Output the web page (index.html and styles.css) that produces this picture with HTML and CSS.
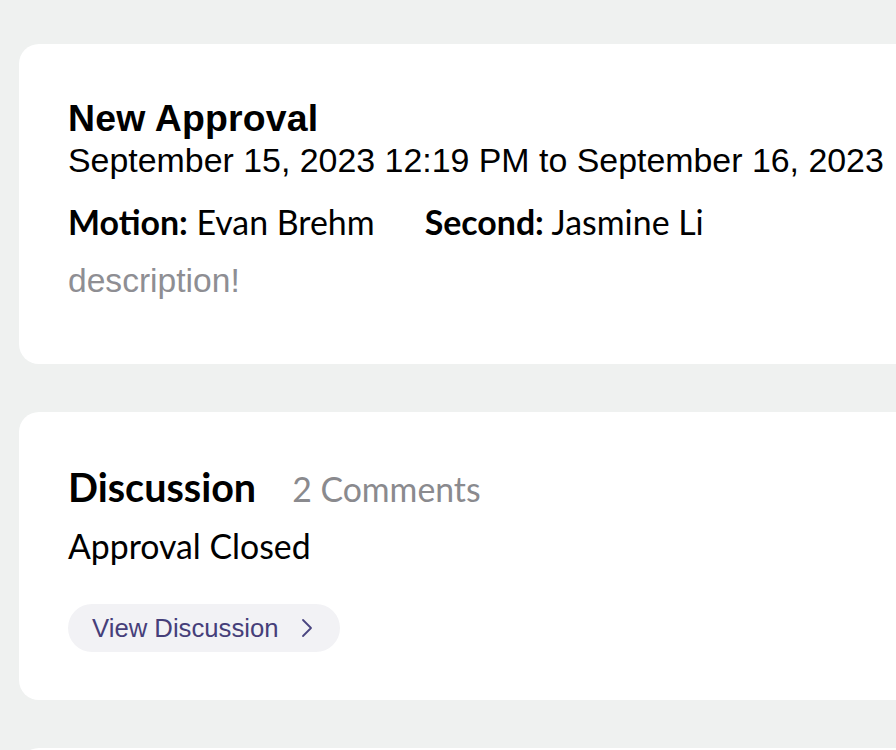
FILE: index.html
```html
<!DOCTYPE html>
<html lang="en">
<head>
<meta charset="utf-8">
<title>Approval</title>
<link rel="stylesheet" href="styles.css">
</head>
<body>
<main class="feed">
  <section class="card card-approval">
    <h1 class="title">New Approval</h1>
    <p class="dates">September 15, 2023 12:19 PM to September 16, 2023</p>
    <div class="people">
      <span class="person"><b>Motion:</b> Evan Brehm</span>
      <span class="person"><b>Second:</b> Jasmine Li</span>
    </div>
    <p class="desc">description!</p>
  </section>
  <section class="card card-discussion">
    <div class="disc-head">
      <h2 class="disc-title">Discussion</h2>
      <span class="disc-count">2 Comments</span>
    </div>
    <p class="status">Approval Closed</p>
    <button class="view-btn" type="button">
      <span>View Discussion</span>
      <svg class="chev" width="12" height="20" viewBox="0 0 12 20" aria-hidden="true"><path d="M2 2 L10 10 L2 18" fill="none" stroke="#4a4580" stroke-width="1.8" stroke-linecap="round" stroke-linejoin="round"/></svg>
    </button>
  </section>
  <section class="card card-next"></section>
</main>
</body>
</html>
```
FILE: styles.css
```css
html, body {
  margin: 0;
  padding: 0;
  overflow: hidden;
  background: #eff1f0;
}
.feed {
  display: flex;
  flex-direction: column;
  gap: 48px;
  width: 896px;
  height: 750px;
  box-sizing: border-box;
  padding: 44px 0 0 19px;
  overflow: hidden;
}
.card {
  flex: none;
  background: #ffffff;
  border-radius: 20px 0 0 20px;
  box-sizing: border-box;
  padding-left: 49px;
}
.card-approval {
  height: 320px;
  padding-top: 53px;
}
.title {
  margin: 0;
  font-family: "Liberation Sans", Arial, sans-serif;
  font-weight: 700;
  font-size: 37.4px;
  line-height: 42px;
  color: #000;
  letter-spacing: 0.2px;
}
.dates {
  margin: 0;
  font-family: "Liberation Sans", Arial, sans-serif;
  font-size: 33.9px;
  line-height: 42px;
  color: #000;
  white-space: nowrap;
}
.people {
  display: flex;
  gap: 50px;
  margin-top: 21px;
  font-family: Lato, sans-serif;
  font-size: 33.9px;
  line-height: 40px;
  color: #000;
}
.people b {
  font-weight: 700;
}
.desc {
  margin: 18px 0 0;
  font-family: "Liberation Sans", Arial, sans-serif;
  font-size: 33.6px;
  line-height: 42px;
  color: #8e8e93;
}
.card-discussion {
  height: 288px;
  padding-top: 53px;
}
.disc-head {
  display: flex;
  align-items: baseline;
  gap: 36px;
  height: 44px;
}
.disc-title {
  margin: 0;
  font-family: Lato, sans-serif;
  font-weight: 700;
  font-size: 39.5px;
  line-height: 44px;
  color: #000;
}
.disc-count {
  font-family: Lato, sans-serif;
  font-size: 33.8px;
  line-height: 44px;
  color: #8a8a8e;
}
.status {
  margin: 17px 0 0;
  font-family: Lato, sans-serif;
  font-size: 33.8px;
  line-height: 40px;
  color: #000;
}
.view-btn {
  margin-top: 38px;
  display: inline-flex;
  align-items: center;
  gap: 22px;
  height: 48px;
  padding: 0 27px 0 24px;
  border: none;
  border-radius: 24px;
  background: #f2f2f5;
  font-family: "Liberation Sans", Arial, sans-serif;
  font-size: 25.7px;
  color: #463f7a;
  cursor: pointer;
}
.chev {
  display: block;
}
.card-next {
  height: 200px;
}
```
